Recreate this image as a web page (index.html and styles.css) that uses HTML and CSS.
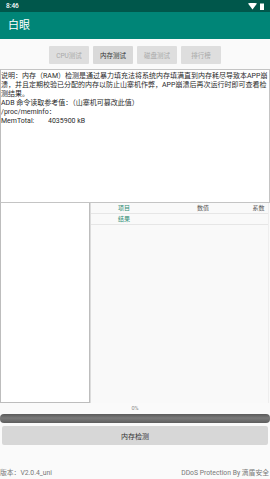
FILE: index.html
```html
<!DOCTYPE html>
<html lang="zh">
<head>
<meta charset="utf-8">
<title>白眼</title>
<link rel="stylesheet" href="styles.css">
</head>
<body>
<div class="app">
  <div class="status">
    <span class="time">8:46</span>
    <span class="sicons">
      <svg class="wifi" width="9" height="7" viewBox="0 0 9 7"><path d="M0 0.5 Q4.5 -1 9 0.5 L4.5 6.5 Z" fill="#fff"/></svg>
      <svg class="batt" width="4" height="7" viewBox="0 0 4 7"><rect x="0" y="0.5" width="4" height="6.5" fill="#fff"/></svg>
    </span>
  </div>
  <div class="toolbar">白眼</div>
  <div class="tabs">
    <span class="tab">CPU测试</span>
    <span class="tab active">内存测试</span>
    <span class="tab">磁盘测试</span>
    <span class="tab">排行榜</span>
  </div>
  <div class="info">
    <div>说明：内存（RAM）检测是通过暴力填充法将系统内存填满直到内存耗尽导致本APP崩</div>
    <div>溃，并且定期校验已分配的内存以防止山寨机作弊，APP崩溃后再次运行时即可查看检</div>
    <div>测结果。</div>
    <div>ADB 命令读取参考值：（山寨机可篡改此值）</div>
    <div>/proc/meminfo：</div>
    <div><span class="key">MemTotal:</span>4035900 kB</div>
  </div>
  <div class="panels">
    <div class="left"></div>
    <div class="right">
      <div class="row head">
        <span class="c1 teal">项目</span>
        <span class="c2">数值</span>
        <span class="c3">系数</span>
      </div>
      <div class="row">
        <span class="c1 teal">结果</span>
        <span class="c2"></span>
        <span class="c3"></span>
      </div>
    </div>
  </div>
  <div class="pct">0%</div>
  <div class="bar"></div>
  <div class="action">内存检测</div>
  <div class="footer">
    <span>版本：V2.0.4_uni</span>
    <span>DDoS Protection By 滴盾安全</span>
  </div>
</div>
</body>
</html>
```

FILE: styles.css
```css
html, body {
  margin: 0;
  padding: 0;
}
body {
  background: #fafafa;
  font-family: Roboto, "Noto Sans CJK SC", sans-serif;
  color: #222;
}
.app {
  width: 270px;
  height: 479px;
  display: flex;
  flex-direction: column;
  overflow: hidden;
}
.status {
  height: 12px;
  background: #00574b;
  color: #fff;
  display: flex;
  align-items: center;
  justify-content: space-between;
  padding: 0 6px;
  font-size: 6.5px;
  font-weight: 500;
}
.sicons {
  display: flex;
  align-items: center;
  gap: 3px;
}
.sicons svg { display: block; }
.toolbar {
  height: 27px;
  background: #008577;
  color: #fff;
  font-size: 11px;
  line-height: 27px;
  padding-left: 8px;
}
.tabs {
  display: flex;
  justify-content: center;
  gap: 4px;
  margin-top: 7px;
  height: 18px;
}
.tab {
  width: 40px;
  height: 18px;
  background: #dedede;
  color: #a9a9a9;
  font-size: 6.5px;
  display: flex;
  align-items: center;
  justify-content: center;
  border-radius: 1px;
}
.tab.active {
  background: #d9d9d9;
  color: #333;
}
.info {
  margin-top: 5px;
  height: 130px;
  border: 1px solid #c4c4c4;
  border-left-color: #bdbdbd;
  background: #fff;
  padding-top: 2px;
  font-size: 7px;
  line-height: 9px;
  color: #2a2a2a;
  white-space: nowrap;
  overflow: hidden;
}
.key {
  display: inline-block;
  width: 47px;
}
.panels {
  display: flex;
  height: 200px;
}
.left {
  width: 88px;
  background: #fff;
  border: 1px solid #bdbdbd;
  border-top: none;
}
.right {
  flex: 1;
  background: #f9f9f9;
  border-left: 1px solid #dcdcdc;
  border-right: 1px solid #eeeeee;
  margin-right: 1px;
}
.row {
  display: grid;
  grid-template-columns: 66px 92px 1fr;
  height: 10px;
  line-height: 10px;
  font-size: 6px;
  border-bottom: 1px solid #e6e6e6;
  text-align: center;
  color: #555;
}
.teal { color: #2e8b72; }
.pct {
  margin-top: 2px;
  height: 7px;
  line-height: 7px;
  font-size: 5.5px;
  color: #8a8a8a;
  text-align: center;
}
.bar {
  margin-top: 2px;
  height: 9px;
  border-radius: 4px;
  background: linear-gradient(#5a5a5a, #7a7a7a 45%, #5e5e5e);
}
.action {
  margin: 3px 2px 0 2px;
  height: 19px;
  background: #d7d7d7;
  border-radius: 2px;
  font-size: 7px;
  color: #333;
  display: flex;
  align-items: center;
  justify-content: center;
}
.footer {
  margin-top: auto;
  margin-bottom: 1px;
  display: flex;
  justify-content: space-between;
  font-size: 6.8px;
  line-height: 9px;
  color: #777;
  padding-right: 1px;
}
```
